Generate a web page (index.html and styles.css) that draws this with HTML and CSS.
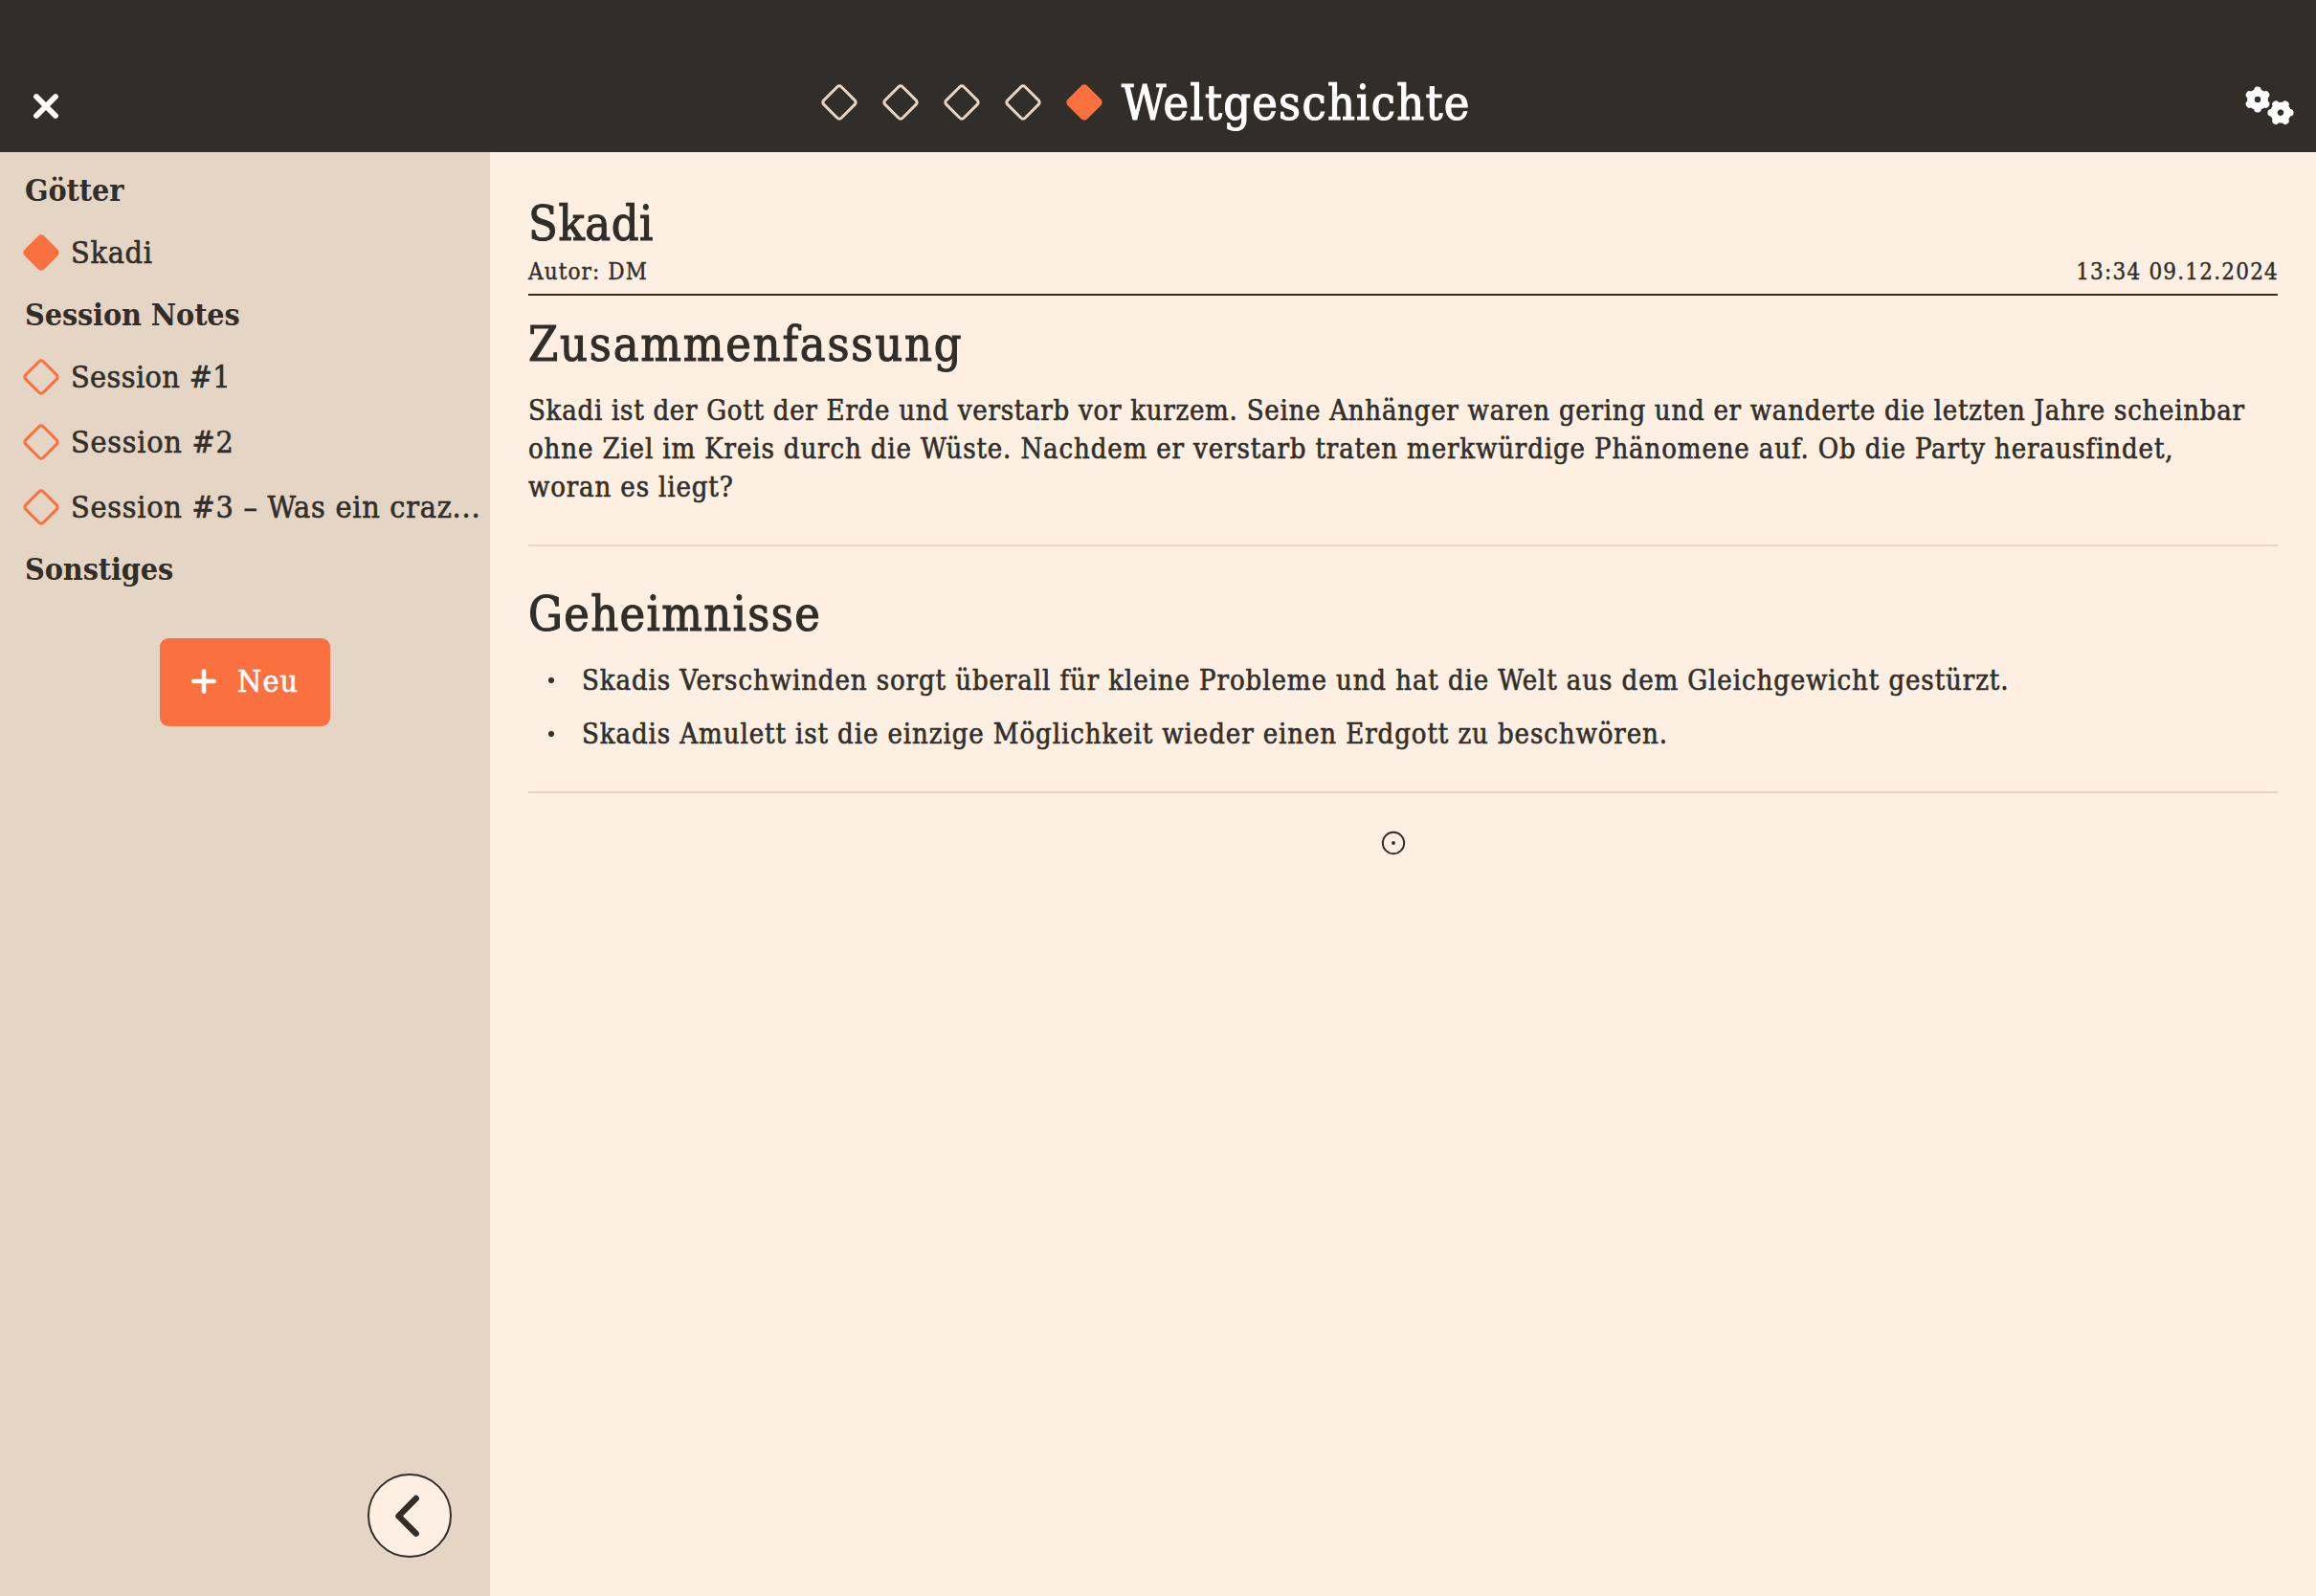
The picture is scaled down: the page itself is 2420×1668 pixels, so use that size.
FILE: index.html
```html
<!DOCTYPE html>
<html lang="de">
<head>
<meta charset="utf-8">
<title>Weltgeschichte</title>
<link rel="stylesheet" href="styles.css">
</head>
<body>
<header class="topbar">
  <svg class="close" width="32" height="32" viewBox="0 0 32 32"><path d="M6 6L26 26M26 6L6 26"/></svg>
  <div class="steps">
    <svg class="gem" viewBox="0 0 38 38"><rect x="6" y="6" width="26" height="26" rx="3"/></svg>
    <svg class="gem" viewBox="0 0 38 38"><rect x="6" y="6" width="26" height="26" rx="3"/></svg>
    <svg class="gem" viewBox="0 0 38 38"><rect x="6" y="6" width="26" height="26" rx="3"/></svg>
    <svg class="gem" viewBox="0 0 38 38"><rect x="6" y="6" width="26" height="26" rx="3"/></svg>
    <svg class="gem full" viewBox="0 0 38 38"><rect x="6" y="6" width="26" height="26" rx="3"/></svg>
    <h1 class="title">Weltgeschichte</h1>
  </div>
  <svg class="gears" width="54" height="44" viewBox="0 0 54 44">
    <defs><g id="gear"><circle r="10.8"/><path class="teeth" d="M0 -9.8V9.8M-8.5 -4.9L8.5 4.9M-8.5 4.9L8.5 -4.9"/><circle class="hole" r="3.2"/></g></defs>
    <use href="#gear" x="15" y="15"/>
    <use href="#gear" transform="translate(39 28.7) rotate(30)"/>
  </svg>
</header>
<div class="body">
  <aside class="sidebar">
    <h2 class="group">Götter</h2>
    <div class="entry"><svg class="gem full" viewBox="0 0 38 38"><rect x="6" y="6" width="26" height="26" rx="3"/></svg><span>Skadi</span></div>
    <h2 class="group">Session Notes</h2>
    <div class="entry tight"><svg class="gem" viewBox="0 0 38 38"><rect x="6" y="6" width="26" height="26" rx="3"/></svg><span>Session #1</span></div>
    <div class="entry"><svg class="gem" viewBox="0 0 38 38"><rect x="6" y="6" width="26" height="26" rx="3"/></svg><span>Session #2</span></div>
    <div class="entry"><svg class="gem" viewBox="0 0 38 38"><rect x="6" y="6" width="26" height="26" rx="3"/></svg><span>Session #3 – Was ein craz...</span></div>
    <h2 class="group">Sonstiges</h2>
    <button class="new"><svg width="28" height="28" viewBox="0 0 28 28"><path d="M14 3.3V24.7M3.3 14H24.7"/></svg><span>Neu</span></button>
    <button class="back" aria-label="Zurück"><svg width="88" height="88" viewBox="0 0 88 88"><path d="M50.7 26L32.5 44.5L50.7 62.7"/></svg></button>
  </aside>
  <main class="page">
    <h2 class="name">Skadi</h2>
    <div class="meta"><span>Autor: DM</span><span class="date">13:34 09.12.2024</span></div>
    <h2 class="heading summary">Zusammenfassung</h2>
    <p class="text"><span class="line-a">Skadi ist der Gott der Erde und verstarb vor kurzem. Seine Anhänger waren gering und er wanderte die letzten Jahre scheinbar</span><br>ohne Ziel im Kreis durch die Wüste. Nachdem er verstarb traten merkwürdige Phänomene auf. Ob die Party herausfindet,<br>woran es liegt?</p>
    <hr class="rule">
    <h2 class="heading secrets">Geheimnisse</h2>
    <ul class="list">
      <li>Skadis Verschwinden sorgt überall für kleine Probleme und hat die Welt aus dem Gleichgewicht gestürzt.</li>
      <li>Skadis Amulett ist die einzige Möglichkeit wieder einen Erdgott zu beschwören.</li>
    </ul>
    <hr class="rule">
    <svg class="target" width="26" height="26" viewBox="0 0 26 26"><circle cx="13" cy="13" r="11.2"/><circle class="dot" cx="13" cy="13" r="1.9"/></svg>
  </main>
</div>
</body>
</html>
```
FILE: styles.css
```css
* { box-sizing: border-box; margin: 0; padding: 0; }
body {
  width: 2420px;
  height: 1668px;
  overflow: hidden;
  display: flex;
  flex-direction: column;
  background: #fdefe1;
  color: #312e29;
  font-family: "DejaVu Serif Condensed", "DejaVu Serif", serif;
  font-stretch: condensed;
  -webkit-text-stroke: 0.6px currentColor;
}
h1, h2 { font-weight: 400; }
svg { display: block; flex: none; fill: none; stroke-linecap: round; stroke-linejoin: round; }

/* Top bar */
.topbar { height: 159px; background: #312e29; padding: 0 21.6px 0 32px; display: flex; }
.close { margin-top: 95px; stroke: #fff; stroke-width: 5.8; }
.steps { display: flex; gap: 26px; margin: 88px auto 0 794px; }
.title { color: #fff; font-size: 50px; line-height: 60px; margin: -10px 0 0 -6px; letter-spacing: 1.25px; -webkit-text-stroke-width: 1.1px; white-space: nowrap; }
.gem { width: 38px; height: 38px; stroke: #fa703f; stroke-width: 3; }
.gem rect { transform: rotate(45deg); transform-origin: 19px 19px; }
.gem.full { fill: #fa703f; }
.topbar .gem:not(.full) { stroke: #e5d5c4; }
.gears { margin-top: 89.4px; fill: #fff; }
.teeth { stroke: #fff; stroke-width: 7.6; }
.hole { fill: #312e29; }

/* Sidebar */
.body { flex: 1; display: flex; }
.sidebar { width: 512px; background: #e5d5c4; position: relative; padding: 9px 0 0 24px; font-size: 32px; letter-spacing: 0.76px; }
.group { font-weight: 700; font-size: 32px; line-height: 62px; letter-spacing: -0.1px; padding-left: 2px; -webkit-text-stroke-width: 0; }
.entry { display: flex; gap: 12px; align-items: center; height: 68px; white-space: nowrap; }
.entry.tight { letter-spacing: 0.4px; }
.new {
  display: flex;
  align-items: center;
  gap: 21px;
  width: 178px;
  height: 92px;
  margin: 41px 0 0 143px;
  padding: 0 0 2px 32px;
  border: 0;
  border-radius: 9px;
  background: #fa703f;
  color: #fff;
  font: inherit;
  letter-spacing: 1.2px;
  -webkit-text-stroke: 0.7px #fff;
}
.new svg { stroke: #fff; stroke-width: 4.6; }
.back { position: absolute; right: 40px; bottom: 40px; width: 88px; height: 88px; border: 2px solid #312e29; border-radius: 50%; background: #fdefe1; }
.back svg { margin: -2px; stroke: #312e29; stroke-width: 6.4; }

/* Page */
.page { flex: 1; padding: 43px 40px 0; }
.name, .heading { font-size: 50px; line-height: 64px; -webkit-text-stroke-width: 1.1px; }
.name { letter-spacing: 0.6px; }
.meta { display: flex; justify-content: space-between; font-size: 24px; line-height: 37px; letter-spacing: 1.1px; padding-bottom: 4px; border-bottom: 2px solid #312e29; -webkit-text-stroke-width: 0.4px; }
.date { letter-spacing: 1.2px; margin-right: -1px; }
.summary { margin-top: 19px; letter-spacing: 1.8px; }
.secrets { margin-top: 39px; letter-spacing: 1.35px; }
.text, .list { margin-top: 17px; font-size: 29px; line-height: 40px; white-space: nowrap; letter-spacing: 0.87px; }
.line-a { letter-spacing: 0.74px; }
.rule { border: 0; height: 2px; margin-top: 40px; background: #e5d5c4; }
.list { list-style: none; display: grid; gap: 16px; letter-spacing: 0.91px; }
.list li { display: flex; align-items: center; padding-left: 21px; }
.list li::before { content: ""; width: 6px; height: 6px; margin-right: 29px; border-radius: 50%; background: #312e29; }
.target { margin: 39px 0 0 891px; stroke: #312e29; stroke-width: 1.9; }
.dot { fill: #312e29; stroke: none; }
```
